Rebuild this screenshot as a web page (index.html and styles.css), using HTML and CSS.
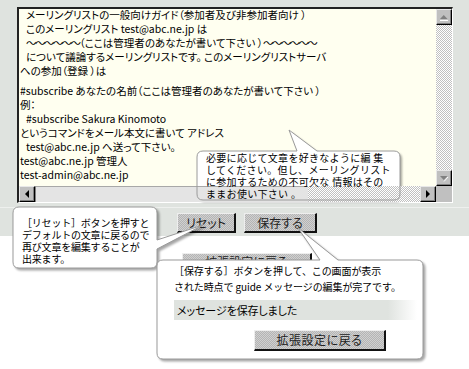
FILE: index.html
```html
<!DOCTYPE html>
<html lang="ja">
<head>
<meta charset="utf-8">
<title>guide メッセージ編集</title>
<link rel="stylesheet" href="styles.css">
</head>
<body>
<div class="page">
  <div class="panel">
    <div class="editor">
      <div class="ta-text">
        <div class="ln ind">メーリングリストの一般向けガイド（参加者及び非参加者向け ）</div>
        <div class="ln ind">このメーリングリスト test@abc.ne.jp は</div>
        <div class="ln ind"><span class="tilde">〜〜〜〜〜〜</span>（ここは管理者のあなたが書いて下さい ）<span class="tilde">〜〜〜〜〜〜</span></div>
        <div class="ln ind">について議論するメーリングリストです。 このメーリングリストサーバ</div>
        <div class="ln">への参加（登録 ）は</div>
        <div class="blank"></div>
        <div class="ln">#subscribe あなたの名前（ここは管理者のあなたが書いて下さい ）</div>
        <div class="ln">例：</div>
        <div class="ln ind">#subscribe Sakura Kinomoto</div>
        <div class="ln">というコマンドをメール本文に書いて アドレス</div>
        <div class="ln ind">test@abc.ne.jp へ送って下さい。</div>
        <div class="ln">test@abc.ne.jp 管理人</div>
        <div class="ln">test-admin@abc.ne.jp</div>
      </div>
      <div class="vscroll">
        <div class="sbtn"><svg width="14" height="14" viewBox="0 0 14 14"><polygon points="3,9 10.5,9 6.75,5" fill="#808080"/><line x1="3" y1="10.5" x2="11" y2="10.5" stroke="#fff"/></svg></div>
        <div class="track"></div>
        <div class="sbtn"><svg width="14" height="14" viewBox="0 0 14 14"><polygon points="3,5 10.5,5 6.75,9" fill="#808080"/><line x1="7" y1="10.5" x2="11" y2="6" stroke="#fff"/></svg></div>
      </div>
      <div class="hscroll">
        <div class="sbtn"><svg width="14" height="14" viewBox="0 0 14 14"><polygon points="9,3 5,7 9,11" fill="#000"/></svg></div>
        <div class="thumb"></div>
        <div class="track"></div>
        <div class="sbtn"><svg width="14" height="14" viewBox="0 0 14 14"><polygon points="5,3 9,7 5,11" fill="#000"/></svg></div>
      </div>
      <div class="corner"></div>
    </div>
    <div class="btnrow">
      <button class="btn btn-reset">リセット</button>
      <button class="btn btn-save">保存する</button>
    </div>
  </div>
  <div class="below">
    <button class="btn btn-back">拡張設定に戻る</button>
  </div>

  <svg class="shape-under" width="469" height="369" viewBox="0 0 469 369">
    <path class="fill" d="M203,151 L297,151 L289,130 L317,151 L394,151 Q400,151 400,157 L400,194 Q400,200 394,200 L203,200 Q197,200 197,194 L197,157 Q197,151 203,151 Z"/>
  </svg>
  <svg class="shape-over" width="469" height="369" viewBox="0 0 469 369">
    <path class="line" d="M203,151 L297,151 L289,130 L317,151 L394,151 Q400,151 400,157 L400,194 Q400,200 394,200 L203,200 Q197,200 197,194 L197,157 Q197,151 203,151 Z"/>
    <path class="fill line" d="M19,207 L151,207 Q157,207 157,213 L157,240 L203,225 L157,249 L157,262 Q157,268 151,268 L19,268 Q13,268 13,262 L13,213 Q13,207 19,207 Z"/>
    <path class="fill line" d="M163,260 L320,260 L298,228 L338,260 L417,260 Q423,260 423,266 L423,353 Q423,359 417,359 L163,359 Q157,359 157,353 L157,266 Q157,260 163,260 Z"/>
  </svg>

  <div class="note note-edit">
    <div>必要に応じて文章を好きなように編 集</div>
    <div>してください。但し、メーリングリスト</div>
    <div>に参加するための不可欠な 情報はその</div>
    <div>ままお使い下さい 。</div>
  </div>
  <div class="note note-reset">
    <div>［リセット］ボタンを押すと</div>
    <div>デフォルトの文章に戻るので</div>
    <div>再び文章を編集することが</div>
    <div>出来ます。</div>
  </div>
  <div class="note note-save">
    <div class="save-line">［保存する］ボタンを押して、この画面が表示</div>
    <div class="save-line">された時点で guide メッセージの編集が完了です。</div>
    <div class="saved">メッセージを保存しました</div>
    <div class="save-actions"><button class="btn btn-back2">拡張設定に戻る</button></div>
  </div>
</div>
</body>
</html>
```
FILE: styles.css
```css
* { box-sizing: border-box; }
html, body { margin: 0; padding: 0; background: #fff; }
body {
  font-family: "Noto Sans CJK JP", "Noto Sans", sans-serif;
  color: #000;
}
.page {
  position: relative;
  width: 469px;
  height: 369px;
  overflow: hidden;
}
.panel {
  background: #dfe3df;
  height: 236px;
  padding-top: 7px;
}
.editor {
  margin-left: 17px;
  width: 436px;
  height: 196px;
  background: #fffff0;
  border-style: solid;
  border-width: 2px 1px 1px 2px;
  border-color: #222 #fff #fff #222;
  display: grid;
  grid-template-columns: 1fr 16px;
  grid-template-rows: 1fr 16px;
}
.ta-text {
  grid-column: 1;
  grid-row: 1;
  padding-left: 1px;
  margin-top: -1px;
  font-size: 10.5px;
  line-height: 14px;
  font-feature-settings: "palt";
  overflow: hidden;
}
.ln { white-space: nowrap; }
.ln.ind { padding-left: 6px; }
.tilde { letter-spacing: -1.6px; }
.blank { height: 6px; }
.vscroll {
  grid-column: 2;
  grid-row: 1;
  display: flex;
  flex-direction: column;
}
.hscroll {
  grid-column: 1;
  grid-row: 2;
  display: flex;
  position: relative;
  z-index: 2;
}
.corner {
  grid-column: 2;
  grid-row: 2;
  background: #c0c0c0;
}
.sbtn {
  width: 16px;
  height: 16px;
  flex: none;
  background: #c0c0c0;
  border-style: solid;
  border-width: 1px;
  border-color: #e8e8e8 #000 #000 #e8e8e8;
  box-shadow: inset -1px -1px 0 #808080;
}
.sbtn svg { display: block; }
.track {
  flex: 1;
  background: repeating-conic-gradient(#c0c0c0 0 25%, #fff 0 50%) 0 0 / 2px 2px;
}
.thumb {
  width: 273px;
  flex: none;
  background: #e4e4e4;
  border-top: 1px solid #a8a8a8;
  border-left: 1px solid #808080;
}
.btnrow {
  margin-top: 4px;
  border-top: 1px solid #eef0ee;
  padding: 5px 0 0 177px;
  display: flex;
  gap: 8px;
}
.btn {
  font-family: "Noto Sans CJK JP", sans-serif;
  font-size: 12px;
  font-feature-settings: "palt";
  color: #222;
  height: 20px;
  padding: 0;
  line-height: 16px;
  background: repeating-conic-gradient(#b4b4b4 0 25%, #d0d0d0 0 50%) 0 0 / 2px 2px;
  border-style: solid;
  border-width: 1px 2px 2px 1px;
  border-color: #eee #111 #111 #eee;
}
.btn-reset { width: 59px; }
.btn-save { width: 73px; }
.below {
  padding: 12px 0 0 182px;
}
.btn-back { width: 130px; }

.shape-under, .shape-over {
  position: absolute;
  left: 0;
  top: 0;
  pointer-events: none;
}
.shape-under { z-index: 1; }
.shape-over { z-index: 3; }
.fill {
  fill: #fff;
  filter: drop-shadow(2px 2px 1px rgba(0, 0, 0, 0.35));
}
.line {
  fill: none;
  stroke: #9a9a9a;
  stroke-width: 1;
}
.shape-over .fill.line { fill: #fff; }

.note {
  position: absolute;
  z-index: 4;
  font-size: 10px;
  color: #000;
  white-space: nowrap;
}
.note-edit {
  left: 206px;
  top: 152px;
  line-height: 12px;
  letter-spacing: 0.3px;
}
.note-reset {
  left: 22px;
  top: 217px;
  line-height: 12px;
  letter-spacing: -0.2px;
}
.note-save {
  left: 174px;
  top: 263px;
  width: 243px;
  line-height: 16px;
  letter-spacing: -0.1px;
}
.saved {
  margin-top: 5px;
  height: 20px;
  line-height: 20px;
  padding-left: 3px;
  font-size: 11px;
  font-feature-settings: "palt";
  background: linear-gradient(to right, #dfe3df 0, #dfe3df 88%, #fff 100%);
}
.save-actions {
  padding: 10px 0 0 80px;
}
.btn-back2 {
  width: 132px;
  height: 21px;
  letter-spacing: 0.5px;
}
```
